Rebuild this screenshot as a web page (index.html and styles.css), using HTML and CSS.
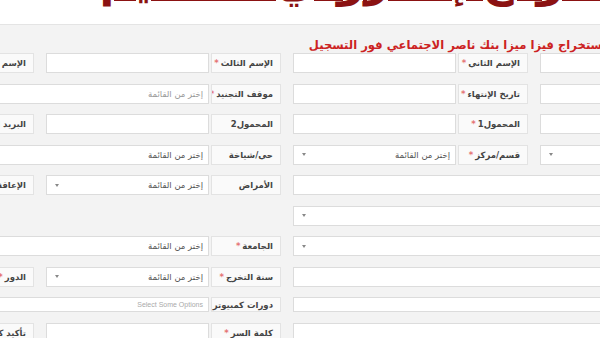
FILE: index.html
```html
<!DOCTYPE html>
<html lang="ar" dir="rtl">
<head>
  <meta charset="UTF-8">
  <title>نموذج التسجيل</title>
  <link rel="stylesheet" href="styles.css">
</head>
<body>
  <header class="top">
    <h1 class="title">نموذج إلكتروني للتقديم</h1>
  </header>

  <main class="form-area">
    <p class="notice">استخراج فيزا ميزا بنك ناصر الاجتماعي فور التسجيل</p>

    <div class="grid">
      <!-- row 1 -->
      <div class="field"><span class="label">الإسم الأول <span class="req">*</span></span><span class="input"></span></div>
      <div class="field"><span class="label">الإسم الثاني <span class="req">*</span></span><span class="input"></span></div>
      <div class="field"><span class="label">الإسم الثالث<span class="req">*</span></span><span class="input"></span></div>
      <div class="field"><span class="label">الإسم الرابع<span class="req">*</span></span><span class="input"></span></div>

      <!-- row 2 -->
      <div class="field"><span class="label">تاريخ الميلاد <span class="req">*</span></span><span class="input"></span></div>
      <div class="field"><span class="label">تاريخ الإنتهاء <span class="req">*</span></span><span class="input"></span></div>
      <div class="field span2"><span class="label">موقف التجنيد<span class="req">*</span></span><span class="input select light">إختر من القائمة</span></div>

      <!-- row 3 -->
      <div class="field"><span class="label">الرقم القومي <span class="req">*</span></span><span class="input"></span></div>
      <div class="field"><span class="label">المحمول1 <span class="req">*</span></span><span class="input"></span></div>
      <div class="field"><span class="label">المحمول2</span><span class="input"></span></div>
      <div class="field"><span class="label">البريد الإلكتروني</span><span class="input"></span></div>

      <!-- row 4 -->
      <div class="field"><span class="label">المحافظة <span class="req">*</span></span><span class="input select"></span></div>
      <div class="field"><span class="label">قسم/مركز <span class="req">*</span></span><span class="input select">إختر من القائمة</span></div>
      <div class="field span2"><span class="label">حي/شياخة</span><span class="input select">إختر من القائمة</span></div>

      <!-- row 5 -->
      <div class="field span2"><span class="label">العنوان</span><span class="input"></span></div>
      <div class="field"><span class="label">الأمراض</span><span class="input select">إختر من القائمة</span></div>
      <div class="field"><span class="label">الإعاقة</span><span class="input select">إختر من القائمة</span></div>

      <!-- row 6 -->
      <div class="field span2"><span class="label">المؤهل</span><span class="input select"></span></div>
      <div class="field span2"></div>

      <!-- row 7 -->
      <div class="field span2"><span class="label">الكلية</span><span class="input select"></span></div>
      <div class="field span2"><span class="label">الجامعة <span class="req">*</span></span><span class="input select">إختر من القائمة</span></div>

      <!-- row 8 -->
      <div class="field span2"><span class="label">التخصص</span><span class="input"></span></div>
      <div class="field"><span class="label">سنة التخرج<span class="req">*</span></span><span class="input select">إختر من القائمة</span></div>
      <div class="field"><span class="label">الدور<span class="req">*</span></span><span class="input select">إختر من القائمة</span></div>

      <!-- row 9 -->
      <div class="field span2"><span class="label">اللغات</span><span class="input"></span></div>
      <div class="field span2"><span class="label">دورات كمبيوتر</span><span class="input multi">Select Some Options</span></div>

      <!-- row 10 -->
      <div class="field span2"><span class="label">اسم المستخدم</span><span class="input"></span></div>
      <div class="field"><span class="label">كلمة السر<span class="req">*</span></span><span class="input"></span></div>
      <div class="field"><span class="label">تأكيد كلمة السر<span class="req">*</span></span><span class="input"></span></div>
    </div>
  </main>
</body>
</html>
```

FILE: styles.css
```css
html, body {
  margin: 0;
  width: 600px;
  height: 338px;
  overflow: hidden;
}
body {
  font-family: "DejaVu Sans", sans-serif;
  background-color: #f3f3f3;
}
.top {
  height: 24px;
  background-color: #fff;
  border-bottom: 1px solid #e4e4e4;
  overflow: hidden;
}
.title {
  margin: -41px -10px 0 0;
  font-size: 44px;
  line-height: 44px;
  color: #8b1212;
  text-align: right;
  white-space: nowrap;
  text-decoration: underline;
  text-decoration-thickness: 3px;
}
.form-area {
  direction: rtl;
}
.notice {
  margin: 13px -6px 0 0;
  font-size: 11.6px;
  line-height: 15px;
  font-weight: bold;
  color: #cc2222;
  text-align: right;
  white-space: nowrap;
}
.grid {
  display: grid;
  grid-template-columns: repeat(4, 235px);
  grid-template-rows: repeat(8, 20px) 15px 20px;
  column-gap: 12px;
  row-gap: 10.5px;
  width: 976px;
  margin: 0 -175px 0 0;
}
.field {
  display: flex;
  gap: 2px;
}
.field.span2 {
  grid-column: span 2;
}
.label {
  flex: none;
  width: 70px;
  box-sizing: border-box;
  display: flex;
  align-items: center;
  padding: 0 7px;
  background-color: #fafafa;
  border: 1px solid #e3e3e3;
  font-size: 8.5px;
  font-weight: bold;
  color: #444;
  white-space: nowrap;
  overflow: hidden;
}
.req {
  color: #e57373;
  margin-right: 2px;
}
.input {
  flex: 1;
  box-sizing: border-box;
  display: flex;
  align-items: center;
  justify-content: space-between;
  padding: 0 5px;
  background-color: #fff;
  border: 1px solid #dcdcdc;
  font-size: 8.5px;
  color: #555;
  white-space: nowrap;
}
.input.light {
  color: #999;
}
.select::after {
  content: "";
  margin-right: auto;
  margin-left: 3px;
  border-top: 3px solid #888;
  border-left: 2px solid transparent;
  border-right: 2px solid transparent;
}
.multi {
  font-family: "Liberation Sans", sans-serif;
  font-size: 7px;
  color: #aaa;
}
```
